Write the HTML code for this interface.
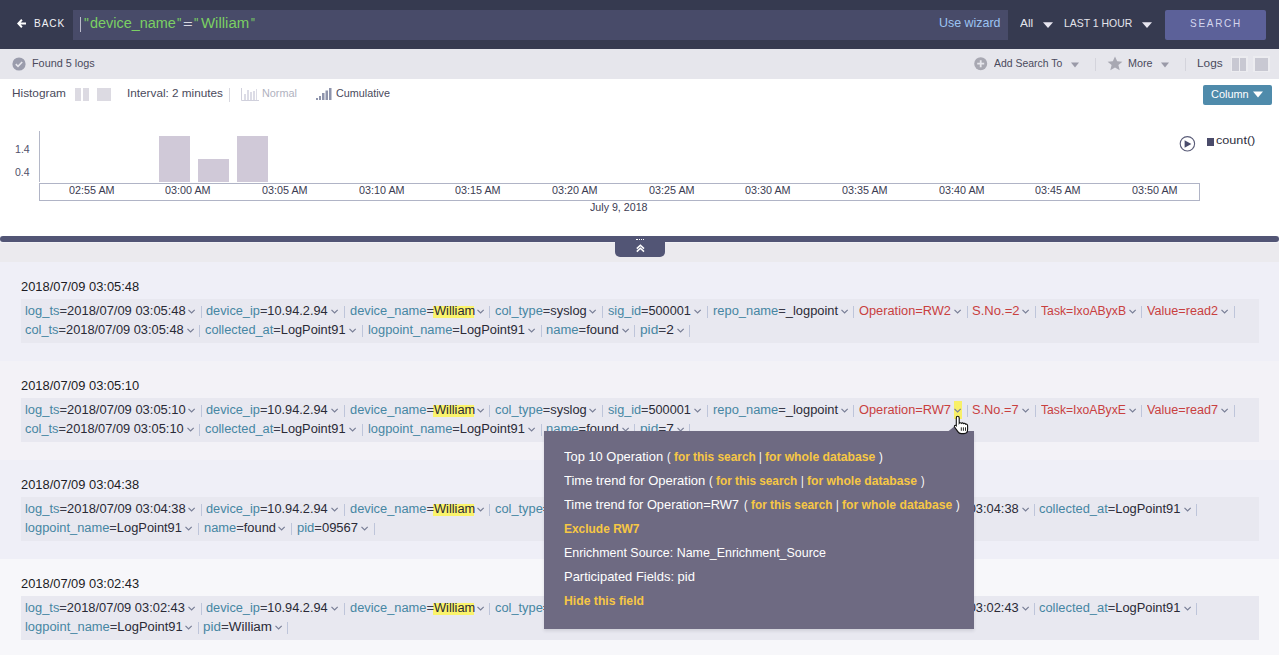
<!DOCTYPE html>
<html><head><meta charset="utf-8"><style>
html,body{margin:0;padding:0;width:1279px;height:655px;overflow:hidden;background:#efeff7;position:relative;font-family:"Liberation Sans", sans-serif}
.t{position:absolute;white-space:nowrap;transform-origin:0 0;font-family:"Liberation Sans", sans-serif}
</style></head><body>
<div style="position:absolute;left:0px;top:0px;width:1279px;height:49px;background:#363a50;"></div>
<svg style="position:absolute;left:16px;top:18px" width="11" height="11" viewBox="0 0 11 11"><path d="M5.2 1 L1 5.5 L5.2 10 L6.6 8.6 L4.6 6.6 L10 6.6 L10 4.4 L4.6 4.4 L6.6 2.4 Z" fill="#ffffff"/></svg>
<div class="t" style="left:33.91px;top:18.00px;font-size:11px;line-height:11px;color:#f2f2f6;font-weight:normal;letter-spacing:1px;transform:scaleX(0.9156)">BACK</div>
<div style="position:absolute;left:73px;top:10px;width:935px;height:30px;background:#484b69;"></div>
<div style="position:absolute;left:80px;top:17px;width:1.2px;height:15px;background:#bcbccc;"></div>
<div class="t" style="left:83.71px;top:16.00px;font-size:14px;line-height:14px;color:#7bd063;font-weight:normal;transform:scaleX(0.9750)">&quot;</div>
<div class="t" style="left:89.58px;top:16.00px;font-size:14px;line-height:14px;color:#7bd063;font-weight:normal;transform:scaleX(1.0310)">device_name</div>
<div class="t" style="left:177.16px;top:16.00px;font-size:14px;line-height:14px;color:#7bd063;font-weight:normal;transform:scaleX(0.8750)">&quot;</div>
<div class="t" style="left:183.05px;top:19.00px;font-size:11px;line-height:11px;color:#d8d8e2;font-weight:normal;transform:scaleX(1.5091)">=</div>
<div class="t" style="left:194.36px;top:16.00px;font-size:14px;line-height:14px;color:#7bd063;font-weight:normal;transform:scaleX(0.8750)">&quot;</div>
<div class="t" style="left:200.70px;top:16.00px;font-size:14px;line-height:14px;color:#7bd063;font-weight:normal;transform:scaleX(1.0689)">William</div>
<div class="t" style="left:250.71px;top:16.00px;font-size:14px;line-height:14px;color:#7bd063;font-weight:normal;transform:scaleX(0.7750)">&quot;</div>
<div class="t" style="left:939.08px;top:16.00px;font-size:13.5px;line-height:13.5px;color:#9cc3f3;font-weight:normal;transform:scaleX(0.9200)">Use wizard</div>
<div class="t" style="left:1019.60px;top:18.00px;font-size:11.5px;line-height:11.5px;color:#e4e4ec;font-weight:normal;transform:scaleX(1.0333)">All</div>
<svg style="position:absolute;left:1043px;top:22px" width="10" height="7" viewBox="0 0 10 7"><path d="M0 0.2 L10 0.2 L5 6 Z" fill="#e8e6f0"/></svg>
<div class="t" style="left:1064.09px;top:18.00px;font-size:11.5px;line-height:11.5px;color:#e4e4ec;font-weight:normal;transform:scaleX(0.9085)">LAST 1 HOUR</div>
<svg style="position:absolute;left:1142px;top:22px" width="10" height="7" viewBox="0 0 10 7"><path d="M0 0.2 L10 0.2 L5 6 Z" fill="#e8e6f0"/></svg>
<div style="position:absolute;left:1165px;top:10px;width:101px;height:30px;background:#5c6199;border-radius:2px;background-image:radial-gradient(rgba(50,50,80,0.45) 0.35px, transparent 0.6px);background-size:4px 4px;background-position:1px 1px"></div>
<div class="t" style="left:1189.57px;top:18.00px;font-size:11.5px;line-height:11.5px;color:#d4d6ee;font-weight:normal;letter-spacing:2px;transform:scaleX(0.8673)">SEARCH</div>
<div style="position:absolute;left:0px;top:49px;width:1279px;height:30px;background:#e6e6ec;"></div>
<svg style="position:absolute;left:12px;top:57px" width="14" height="14" viewBox="0 0 14 14"><circle cx="7" cy="7" r="6.6" fill="#9a9cac"/><path d="M3.8 7.2 L6 9.3 L10.2 5" stroke="#e6e6ec" stroke-width="1.6" fill="none"/></svg>
<div class="t" style="left:31.63px;top:58.00px;font-size:10.5px;line-height:10.5px;color:#4a4a5c;font-weight:normal;transform:scaleX(1.0319)">Found 5 logs</div>
<svg style="position:absolute;left:974px;top:57px" width="14" height="14" viewBox="0 0 14 14"><circle cx="6.7" cy="6.7" r="6.5" fill="#a8a8b2"/><path d="M6.7 3.2 V10.2 M3.2 6.7 H10.2" stroke="#e6e6ec" stroke-width="1.8"/></svg>
<div class="t" style="left:994.00px;top:58.00px;font-size:10.5px;line-height:10.5px;color:#4a4a5c;font-weight:normal;transform:scaleX(0.9927)">Add Search To</div>
<svg style="position:absolute;left:1071px;top:62px" width="8" height="6" viewBox="0 0 8 6"><path d="M0 0.5 L8 0.5 L4 5.5 Z" fill="#9a9aa8"/></svg>
<div style="position:absolute;left:1095px;top:58px;width:1px;height:13px;background:#d4d4dc;"></div>
<svg style="position:absolute;left:1107px;top:56px" width="16" height="15" viewBox="0 0 16 15"><path d="M8 0.5 L10.2 5.3 L15.4 5.7 L11.4 9.1 L12.7 14.3 L8 11.5 L3.3 14.3 L4.6 9.1 L0.6 5.7 L5.8 5.3 Z" fill="#a8a8b2"/></svg>
<div class="t" style="left:1127.93px;top:58.00px;font-size:10.5px;line-height:10.5px;color:#4a4a5c;font-weight:normal;transform:scaleX(1.0242)">More</div>
<svg style="position:absolute;left:1161px;top:62px" width="8" height="6" viewBox="0 0 8 6"><path d="M0 0.5 L8 0.5 L4 5.5 Z" fill="#9a9aa8"/></svg>
<div style="position:absolute;left:1185px;top:58px;width:1px;height:13px;background:#d4d4dc;"></div>
<div class="t" style="left:1197.16px;top:58.00px;font-size:10.5px;line-height:10.5px;color:#4a4a5c;font-weight:normal;transform:scaleX(1.1264)">Logs</div>
<div style="position:absolute;left:1231px;top:56px;width:17px;height:16px;background:#ececf0;"></div>
<div style="position:absolute;left:1232px;top:57.6px;width:6.5px;height:13.3px;background:#c8c8d2;"></div>
<div style="position:absolute;left:1240px;top:57.6px;width:6.3px;height:13.3px;background:#c8c8d2;"></div>
<div style="position:absolute;left:1253px;top:56px;width:17px;height:16px;background:#ececf0;"></div>
<div style="position:absolute;left:1254.7px;top:57.6px;width:13.3px;height:13.3px;background:#c8c8d2;"></div>
<div style="position:absolute;left:0px;top:79px;width:1279px;height:157px;background:#ffffff;"></div>
<div class="t" style="left:11.69px;top:88.00px;font-size:11px;line-height:11px;color:#4a4a5c;font-weight:normal;transform:scaleX(1.0749)">Histogram</div>
<div style="position:absolute;left:75px;top:88px;width:6px;height:13px;background:#dcdae2;"></div>
<div style="position:absolute;left:83px;top:88px;width:6px;height:13px;background:#dcdae2;"></div>
<div style="position:absolute;left:97px;top:88px;width:14px;height:13px;background:#dcdae2;"></div>
<div class="t" style="left:126.63px;top:88.00px;font-size:11px;line-height:11px;color:#4a4a5c;font-weight:normal;transform:scaleX(1.0678)">Interval: 2 minutes</div>
<div style="position:absolute;left:229px;top:88px;width:1px;height:14px;background:#d8d8e0;"></div>
<svg style="position:absolute;left:241px;top:88px" width="18" height="13" viewBox="0 0 18 13"><path d="M0.5 0 V12.5 H18" stroke="#d0d0dc" stroke-width="1" fill="none"/><rect x="3" y="6" width="2" height="6" fill="#dcdce6"/><rect x="6" y="2" width="2" height="10" fill="#dcdce6"/><rect x="9" y="4" width="2" height="8" fill="#dcdce6"/><rect x="12" y="3" width="2" height="9" fill="#dcdce6"/><rect x="15" y="1" width="1" height="11" fill="#dcdce6"/></svg>
<div class="t" style="left:261.96px;top:88.00px;font-size:11px;line-height:11px;color:#b0b2c0;font-weight:normal;transform:scaleX(0.9853)">Normal</div>
<svg style="position:absolute;left:316px;top:87px" width="16" height="14" viewBox="0 0 16 14"><rect x="0" y="11" width="2" height="2" fill="#8e94ac"/><rect x="3" y="9" width="2" height="4" fill="#8e94ac"/><rect x="6" y="6" width="2.5" height="7" fill="#8e94ac"/><rect x="9.5" y="3.5" width="2.5" height="9.5" fill="#8e94ac"/><rect x="13" y="1" width="2.5" height="12" fill="#8e94ac"/></svg>
<div class="t" style="left:336.21px;top:88.00px;font-size:11px;line-height:11px;color:#4a4a5c;font-weight:normal;transform:scaleX(0.9815)">Cumulative</div>
<div style="position:absolute;left:1203px;top:85px;width:69px;height:20px;background:#4f8bab;border-radius:2px"></div>
<div class="t" style="left:1210.50px;top:89.00px;font-size:11px;line-height:11px;color:#ffffff;font-weight:normal;transform:scaleX(0.9932)">Column</div>
<svg style="position:absolute;left:1253px;top:91px" width="10" height="7" viewBox="0 0 10 7"><path d="M0 0.5 L10 0.5 L5 6.5 Z" fill="#ffffff"/></svg>
<div style="position:absolute;left:39px;top:131px;width:1px;height:51px;background:#b4b8c8;"></div>
<div style="position:absolute;left:39px;top:183px;width:1159px;height:16px;border:1px solid #b0b4c6;border-top-width:1.5px"></div>
<div style="position:absolute;left:159.2px;top:135.8px;width:30.9px;height:46px;background:#d0c9d8;"></div>
<div style="position:absolute;left:198px;top:159px;width:30.9px;height:22.8px;background:#d0c9d8;"></div>
<div style="position:absolute;left:236.8px;top:135.8px;width:30.8px;height:46px;background:#d0c9d8;"></div>
<div class="t" style="left:14.84px;top:144.00px;font-size:10.5px;line-height:10.5px;color:#50506a;font-weight:normal;transform:scaleX(1.0074)">1.4</div>
<div class="t" style="left:14.95px;top:167.00px;font-size:10.5px;line-height:10.5px;color:#50506a;font-weight:normal;transform:scaleX(1.0000)">0.4</div>
<div class="t" style="left:68.64px;top:185.00px;font-size:10.5px;line-height:10.5px;color:#3c3c52;font-weight:normal;transform:scaleX(1.0273)">02:55 AM</div>
<div class="t" style="left:165.32px;top:185.00px;font-size:10.5px;line-height:10.5px;color:#3c3c52;font-weight:normal;transform:scaleX(1.0273)">03:00 AM</div>
<div class="t" style="left:262.00px;top:185.00px;font-size:10.5px;line-height:10.5px;color:#3c3c52;font-weight:normal;transform:scaleX(1.0273)">03:05 AM</div>
<div class="t" style="left:358.68px;top:185.00px;font-size:10.5px;line-height:10.5px;color:#3c3c52;font-weight:normal;transform:scaleX(1.0273)">03:10 AM</div>
<div class="t" style="left:455.36px;top:185.00px;font-size:10.5px;line-height:10.5px;color:#3c3c52;font-weight:normal;transform:scaleX(1.0273)">03:15 AM</div>
<div class="t" style="left:552.04px;top:185.00px;font-size:10.5px;line-height:10.5px;color:#3c3c52;font-weight:normal;transform:scaleX(1.0273)">03:20 AM</div>
<div class="t" style="left:648.72px;top:185.00px;font-size:10.5px;line-height:10.5px;color:#3c3c52;font-weight:normal;transform:scaleX(1.0273)">03:25 AM</div>
<div class="t" style="left:745.40px;top:185.00px;font-size:10.5px;line-height:10.5px;color:#3c3c52;font-weight:normal;transform:scaleX(1.0273)">03:30 AM</div>
<div class="t" style="left:842.08px;top:185.00px;font-size:10.5px;line-height:10.5px;color:#3c3c52;font-weight:normal;transform:scaleX(1.0273)">03:35 AM</div>
<div class="t" style="left:938.76px;top:185.00px;font-size:10.5px;line-height:10.5px;color:#3c3c52;font-weight:normal;transform:scaleX(1.0273)">03:40 AM</div>
<div class="t" style="left:1035.44px;top:185.00px;font-size:10.5px;line-height:10.5px;color:#3c3c52;font-weight:normal;transform:scaleX(1.0273)">03:45 AM</div>
<div class="t" style="left:1132.12px;top:185.00px;font-size:10.5px;line-height:10.5px;color:#3c3c52;font-weight:normal;transform:scaleX(1.0273)">03:50 AM</div>
<div class="t" style="left:590.45px;top:202.00px;font-size:10.5px;line-height:10.5px;color:#3c3c52;font-weight:normal;transform:scaleX(1.0161)">July 9, 2018</div>
<svg style="position:absolute;left:1179px;top:136px" width="17" height="17" viewBox="0 0 17 17"><circle cx="8.4" cy="7.8" r="7.2" fill="none" stroke="#5a5c78" stroke-width="1.1"/><path d="M5.6 4.2 L12.4 8 L5.6 11.8 Z" fill="#4a4c6c"/></svg>
<div style="position:absolute;left:1206.7px;top:138.1px;width:7.5px;height:7.8px;background:#4a4b6a;"></div>
<div class="t" style="left:1216.35px;top:135.00px;font-size:11.5px;line-height:11.5px;color:#2e2e40;font-weight:normal;transform:scaleX(1.0986)">count()</div>
<div style="position:absolute;left:0px;top:242px;width:1279px;height:20px;background:#ebeaee;"></div>
<div style="position:absolute;left:0px;top:242px;width:1279px;height:1px;background:#f1f1f4;"></div>
<div style="position:absolute;left:0px;top:236px;width:1279px;height:6px;background:#525575;border-radius:3px"></div>
<div style="position:absolute;left:615px;top:240px;width:50px;height:17px;background:#525575;border-radius:0 0 5px 5px"></div>
<div style="position:absolute;left:636px;top:238.5px;width:8px;height:1px;border-top:1px dotted #ffffff"></div>
<svg style="position:absolute;left:635.5px;top:243.5px" width="9" height="9" viewBox="0 0 9 9"><path d="M0.8 4.6 L4.4 1.2 L8 4.6 M0.8 7.6 L4.4 4.2 L8 7.6" stroke="#ffffff" stroke-width="1.5" fill="none"/></svg>
<div style="position:absolute;left:0px;top:262px;width:1279px;height:99px;background:#efeff7;"></div>
<div style="position:absolute;left:21px;top:299px;width:1238px;height:44px;background:#e8e8f0;"></div>
<div style="position:absolute;left:0px;top:361px;width:1279px;height:99px;background:#f3f2f7;"></div>
<div style="position:absolute;left:21px;top:398px;width:1238px;height:44px;background:#e8e8f0;"></div>
<div style="position:absolute;left:0px;top:460px;width:1279px;height:99px;background:#efeff7;"></div>
<div style="position:absolute;left:21px;top:497px;width:1238px;height:44px;background:#e8e8f0;"></div>
<div style="position:absolute;left:0px;top:559px;width:1279px;height:96px;background:#f7f7fa;"></div>
<div style="position:absolute;left:21px;top:596px;width:1238px;height:44px;background:#e8e8f0;"></div>
<div class="t" style="left:20.86px;top:281.00px;font-size:12px;line-height:12px;color:#1c1c24;font-weight:normal;transform:scaleX(1.0728)">2018/07/09 03:05:48</div>
<div class="t" style="left:20.86px;top:380.00px;font-size:12px;line-height:12px;color:#1c1c24;font-weight:normal;transform:scaleX(1.0728)">2018/07/09 03:05:10</div>
<div class="t" style="left:20.86px;top:479.00px;font-size:12px;line-height:12px;color:#1c1c24;font-weight:normal;transform:scaleX(1.0728)">2018/07/09 03:04:38</div>
<div class="t" style="left:20.86px;top:578.00px;font-size:12px;line-height:12px;color:#1c1c24;font-weight:normal;transform:scaleX(1.0728)">2018/07/09 03:02:43</div>
<div class="t" style="left:24.69px;top:305.00px;font-size:12px;line-height:12px;color:#000;font-weight:normal;transform:scaleX(1.0777)"><span style="color:#4686a3">log_ts</span><span style="color:#3a3a48">=</span><span style="color:#2a2a36">2018/07/09 03:05:48</span></div>
<svg style="position:absolute;left:188.10px;top:308.50px" width="8" height="5" viewBox="0 0 8 5"><path d="M0.5 0.8 L3.6 3.9 L6.7 0.8" stroke="#787e96" stroke-width="1.2" fill="none"/></svg>
<div style="position:absolute;left:201px;top:306px;width:1px;height:12px;background:#bec5da;"></div>
<div class="t" style="left:206.47px;top:305.00px;font-size:12px;line-height:12px;color:#000;font-weight:normal;transform:scaleX(1.0629)"><span style="color:#4686a3">device_ip</span><span style="color:#3a3a48">=</span><span style="color:#2a2a36">10.94.2.94</span></div>
<svg style="position:absolute;left:331.40px;top:308.50px" width="8" height="5" viewBox="0 0 8 5"><path d="M0.5 0.8 L3.6 3.9 L6.7 0.8" stroke="#787e96" stroke-width="1.2" fill="none"/></svg>
<div style="position:absolute;left:344px;top:306px;width:1px;height:12px;background:#bec5da;"></div>
<div style="position:absolute;left:432.8px;top:306.3px;width:41.19999999999999px;height:11.4px;background:#faf36c;"></div>
<div class="t" style="left:349.56px;top:305.00px;font-size:12px;line-height:12px;color:#000;font-weight:normal;transform:scaleX(1.0704)"><span style="color:#4686a3">device_name</span><span style="color:#3a3a48">=</span><span style="color:#2a2a36">William</span></div>
<svg style="position:absolute;left:476.60px;top:308.50px" width="8" height="5" viewBox="0 0 8 5"><path d="M0.5 0.8 L3.6 3.9 L6.7 0.8" stroke="#787e96" stroke-width="1.2" fill="none"/></svg>
<div style="position:absolute;left:489px;top:306px;width:1px;height:12px;background:#bec5da;"></div>
<div class="t" style="left:495.17px;top:305.00px;font-size:12px;line-height:12px;color:#000;font-weight:normal;transform:scaleX(1.0698)"><span style="color:#4686a3">col_type</span><span style="color:#3a3a48">=</span><span style="color:#2a2a36">syslog</span></div>
<svg style="position:absolute;left:589.20px;top:308.50px" width="8" height="5" viewBox="0 0 8 5"><path d="M0.5 0.8 L3.6 3.9 L6.7 0.8" stroke="#787e96" stroke-width="1.2" fill="none"/></svg>
<div style="position:absolute;left:602px;top:306px;width:1px;height:12px;background:#bec5da;"></div>
<div class="t" style="left:607.54px;top:305.00px;font-size:12px;line-height:12px;color:#000;font-weight:normal;transform:scaleX(1.0559)"><span style="color:#4686a3">sig_id</span><span style="color:#3a3a48">=</span><span style="color:#2a2a36">500001</span></div>
<svg style="position:absolute;left:693.80px;top:308.50px" width="8" height="5" viewBox="0 0 8 5"><path d="M0.5 0.8 L3.6 3.9 L6.7 0.8" stroke="#787e96" stroke-width="1.2" fill="none"/></svg>
<div style="position:absolute;left:707px;top:306px;width:1px;height:12px;background:#bec5da;"></div>
<div class="t" style="left:712.59px;top:305.00px;font-size:12px;line-height:12px;color:#000;font-weight:normal;transform:scaleX(1.0745)"><span style="color:#4686a3">repo_name</span><span style="color:#3a3a48">=</span><span style="color:#2a2a36">_logpoint</span></div>
<svg style="position:absolute;left:841.00px;top:308.50px" width="8" height="5" viewBox="0 0 8 5"><path d="M0.5 0.8 L3.6 3.9 L6.7 0.8" stroke="#787e96" stroke-width="1.2" fill="none"/></svg>
<div style="position:absolute;left:853px;top:306px;width:1px;height:12px;background:#bec5da;"></div>
<div class="t" style="left:859.37px;top:305.00px;font-size:12px;line-height:12px;color:#000;font-weight:normal;transform:scaleX(1.0674)"><span style="color:#c8403f">Operation</span><span style="color:#c8403f">=</span><span style="color:#c8403f">RW2</span></div>
<svg style="position:absolute;left:954.00px;top:308.50px" width="8" height="5" viewBox="0 0 8 5"><path d="M0.5 0.8 L3.6 3.9 L6.7 0.8" stroke="#787e96" stroke-width="1.2" fill="none"/></svg>
<div style="position:absolute;left:967px;top:306px;width:1px;height:12px;background:#bec5da;"></div>
<div class="t" style="left:972.26px;top:305.00px;font-size:12px;line-height:12px;color:#000;font-weight:normal;transform:scaleX(1.0877)"><span style="color:#c8403f">S.No.</span><span style="color:#c8403f">=</span><span style="color:#c8403f">2</span></div>
<svg style="position:absolute;left:1022.40px;top:308.50px" width="8" height="5" viewBox="0 0 8 5"><path d="M0.5 0.8 L3.6 3.9 L6.7 0.8" stroke="#787e96" stroke-width="1.2" fill="none"/></svg>
<div style="position:absolute;left:1035px;top:306px;width:1px;height:12px;background:#bec5da;"></div>
<div class="t" style="left:1041.05px;top:305.00px;font-size:12px;line-height:12px;color:#000;font-weight:normal;transform:scaleX(1.0163)"><span style="color:#c8403f">Task</span><span style="color:#c8403f">=</span><span style="color:#c8403f">IxoAByxB</span></div>
<svg style="position:absolute;left:1129.00px;top:308.50px" width="8" height="5" viewBox="0 0 8 5"><path d="M0.5 0.8 L3.6 3.9 L6.7 0.8" stroke="#787e96" stroke-width="1.2" fill="none"/></svg>
<div style="position:absolute;left:1141px;top:306px;width:1px;height:12px;background:#bec5da;"></div>
<div class="t" style="left:1147.40px;top:305.00px;font-size:12px;line-height:12px;color:#000;font-weight:normal;transform:scaleX(1.0522)"><span style="color:#c8403f">Value</span><span style="color:#c8403f">=</span><span style="color:#c8403f">read2</span></div>
<svg style="position:absolute;left:1221.20px;top:308.50px" width="8" height="5" viewBox="0 0 8 5"><path d="M0.5 0.8 L3.6 3.9 L6.7 0.8" stroke="#787e96" stroke-width="1.2" fill="none"/></svg>
<div style="position:absolute;left:1234px;top:306px;width:1px;height:12px;background:#bec5da;"></div>
<div class="t" style="left:24.97px;top:324.00px;font-size:12px;line-height:12px;color:#000;font-weight:normal;transform:scaleX(1.0685)"><span style="color:#4686a3">col_ts</span><span style="color:#3a3a48">=</span><span style="color:#2a2a36">2018/07/09 03:05:48</span></div>
<svg style="position:absolute;left:186.50px;top:327.50px" width="8" height="5" viewBox="0 0 8 5"><path d="M0.5 0.8 L3.6 3.9 L6.7 0.8" stroke="#787e96" stroke-width="1.2" fill="none"/></svg>
<div style="position:absolute;left:199px;top:325px;width:1px;height:12px;background:#bec5da;"></div>
<div class="t" style="left:205.07px;top:324.00px;font-size:12px;line-height:12px;color:#000;font-weight:normal;transform:scaleX(1.0662)"><span style="color:#4686a3">collected_at</span><span style="color:#3a3a48">=</span><span style="color:#2a2a36">LogPoint91</span></div>
<svg style="position:absolute;left:349.30px;top:327.50px" width="8" height="5" viewBox="0 0 8 5"><path d="M0.5 0.8 L3.6 3.9 L6.7 0.8" stroke="#787e96" stroke-width="1.2" fill="none"/></svg>
<div style="position:absolute;left:362px;top:325px;width:1px;height:12px;background:#bec5da;"></div>
<div class="t" style="left:367.80px;top:324.00px;font-size:12px;line-height:12px;color:#000;font-weight:normal;transform:scaleX(1.0706)"><span style="color:#4686a3">logpoint_name</span><span style="color:#3a3a48">=</span><span style="color:#2a2a36">LogPoint91</span></div>
<svg style="position:absolute;left:527.70px;top:327.50px" width="8" height="5" viewBox="0 0 8 5"><path d="M0.5 0.8 L3.6 3.9 L6.7 0.8" stroke="#787e96" stroke-width="1.2" fill="none"/></svg>
<div style="position:absolute;left:541px;top:325px;width:1px;height:12px;background:#bec5da;"></div>
<div class="t" style="left:546.19px;top:324.00px;font-size:12px;line-height:12px;color:#000;font-weight:normal;transform:scaleX(1.0840)"><span style="color:#4686a3">name</span><span style="color:#3a3a48">=</span><span style="color:#2a2a36">found</span></div>
<svg style="position:absolute;left:621.90px;top:327.50px" width="8" height="5" viewBox="0 0 8 5"><path d="M0.5 0.8 L3.6 3.9 L6.7 0.8" stroke="#787e96" stroke-width="1.2" fill="none"/></svg>
<div style="position:absolute;left:634px;top:325px;width:1px;height:12px;background:#bec5da;"></div>
<div class="t" style="left:639.84px;top:324.00px;font-size:12px;line-height:12px;color:#000;font-weight:normal;transform:scaleX(1.1404)"><span style="color:#4686a3">pid</span><span style="color:#3a3a48">=</span><span style="color:#2a2a36">2</span></div>
<svg style="position:absolute;left:676.60px;top:327.50px" width="8" height="5" viewBox="0 0 8 5"><path d="M0.5 0.8 L3.6 3.9 L6.7 0.8" stroke="#787e96" stroke-width="1.2" fill="none"/></svg>
<div style="position:absolute;left:689px;top:325px;width:1px;height:12px;background:#bec5da;"></div>
<div class="t" style="left:24.69px;top:404.00px;font-size:12px;line-height:12px;color:#000;font-weight:normal;transform:scaleX(1.0777)"><span style="color:#4686a3">log_ts</span><span style="color:#3a3a48">=</span><span style="color:#2a2a36">2018/07/09 03:05:10</span></div>
<svg style="position:absolute;left:188.10px;top:407.50px" width="8" height="5" viewBox="0 0 8 5"><path d="M0.5 0.8 L3.6 3.9 L6.7 0.8" stroke="#787e96" stroke-width="1.2" fill="none"/></svg>
<div style="position:absolute;left:201px;top:405px;width:1px;height:12px;background:#bec5da;"></div>
<div class="t" style="left:206.47px;top:404.00px;font-size:12px;line-height:12px;color:#000;font-weight:normal;transform:scaleX(1.0629)"><span style="color:#4686a3">device_ip</span><span style="color:#3a3a48">=</span><span style="color:#2a2a36">10.94.2.94</span></div>
<svg style="position:absolute;left:331.40px;top:407.50px" width="8" height="5" viewBox="0 0 8 5"><path d="M0.5 0.8 L3.6 3.9 L6.7 0.8" stroke="#787e96" stroke-width="1.2" fill="none"/></svg>
<div style="position:absolute;left:344px;top:405px;width:1px;height:12px;background:#bec5da;"></div>
<div style="position:absolute;left:432.8px;top:405.3px;width:41.19999999999999px;height:11.4px;background:#faf36c;"></div>
<div class="t" style="left:349.56px;top:404.00px;font-size:12px;line-height:12px;color:#000;font-weight:normal;transform:scaleX(1.0704)"><span style="color:#4686a3">device_name</span><span style="color:#3a3a48">=</span><span style="color:#2a2a36">William</span></div>
<svg style="position:absolute;left:476.60px;top:407.50px" width="8" height="5" viewBox="0 0 8 5"><path d="M0.5 0.8 L3.6 3.9 L6.7 0.8" stroke="#787e96" stroke-width="1.2" fill="none"/></svg>
<div style="position:absolute;left:489px;top:405px;width:1px;height:12px;background:#bec5da;"></div>
<div class="t" style="left:495.17px;top:404.00px;font-size:12px;line-height:12px;color:#000;font-weight:normal;transform:scaleX(1.0698)"><span style="color:#4686a3">col_type</span><span style="color:#3a3a48">=</span><span style="color:#2a2a36">syslog</span></div>
<svg style="position:absolute;left:589.20px;top:407.50px" width="8" height="5" viewBox="0 0 8 5"><path d="M0.5 0.8 L3.6 3.9 L6.7 0.8" stroke="#787e96" stroke-width="1.2" fill="none"/></svg>
<div style="position:absolute;left:602px;top:405px;width:1px;height:12px;background:#bec5da;"></div>
<div class="t" style="left:607.54px;top:404.00px;font-size:12px;line-height:12px;color:#000;font-weight:normal;transform:scaleX(1.0559)"><span style="color:#4686a3">sig_id</span><span style="color:#3a3a48">=</span><span style="color:#2a2a36">500001</span></div>
<svg style="position:absolute;left:693.80px;top:407.50px" width="8" height="5" viewBox="0 0 8 5"><path d="M0.5 0.8 L3.6 3.9 L6.7 0.8" stroke="#787e96" stroke-width="1.2" fill="none"/></svg>
<div style="position:absolute;left:707px;top:405px;width:1px;height:12px;background:#bec5da;"></div>
<div class="t" style="left:712.59px;top:404.00px;font-size:12px;line-height:12px;color:#000;font-weight:normal;transform:scaleX(1.0745)"><span style="color:#4686a3">repo_name</span><span style="color:#3a3a48">=</span><span style="color:#2a2a36">_logpoint</span></div>
<svg style="position:absolute;left:841.00px;top:407.50px" width="8" height="5" viewBox="0 0 8 5"><path d="M0.5 0.8 L3.6 3.9 L6.7 0.8" stroke="#787e96" stroke-width="1.2" fill="none"/></svg>
<div style="position:absolute;left:853px;top:405px;width:1px;height:12px;background:#bec5da;"></div>
<div class="t" style="left:859.37px;top:404.00px;font-size:12px;line-height:12px;color:#000;font-weight:normal;transform:scaleX(1.0674)"><span style="color:#c8403f">Operation</span><span style="color:#c8403f">=</span><span style="color:#c8403f">RW7</span></div>
<div style="position:absolute;left:954px;top:401.2px;width:8px;height:17.7px;background:#f8f068;"></div>
<svg style="position:absolute;left:954.00px;top:407.50px" width="8" height="5" viewBox="0 0 8 5"><path d="M0.5 0.8 L3.6 3.9 L6.7 0.8" stroke="#787e96" stroke-width="1.2" fill="none"/></svg>
<div style="position:absolute;left:967px;top:405px;width:1px;height:12px;background:#bec5da;"></div>
<div class="t" style="left:972.27px;top:404.00px;font-size:12px;line-height:12px;color:#000;font-weight:normal;transform:scaleX(1.0643)"><span style="color:#c8403f">S.No.</span><span style="color:#c8403f">=</span><span style="color:#c8403f">7</span></div>
<svg style="position:absolute;left:1022.40px;top:407.50px" width="8" height="5" viewBox="0 0 8 5"><path d="M0.5 0.8 L3.6 3.9 L6.7 0.8" stroke="#787e96" stroke-width="1.2" fill="none"/></svg>
<div style="position:absolute;left:1035px;top:405px;width:1px;height:12px;background:#bec5da;"></div>
<div class="t" style="left:1041.05px;top:404.00px;font-size:12px;line-height:12px;color:#000;font-weight:normal;transform:scaleX(1.0133)"><span style="color:#c8403f">Task</span><span style="color:#c8403f">=</span><span style="color:#c8403f">IxoAByxE</span></div>
<svg style="position:absolute;left:1129.00px;top:407.50px" width="8" height="5" viewBox="0 0 8 5"><path d="M0.5 0.8 L3.6 3.9 L6.7 0.8" stroke="#787e96" stroke-width="1.2" fill="none"/></svg>
<div style="position:absolute;left:1141px;top:405px;width:1px;height:12px;background:#bec5da;"></div>
<div class="t" style="left:1147.40px;top:404.00px;font-size:12px;line-height:12px;color:#000;font-weight:normal;transform:scaleX(1.0522)"><span style="color:#c8403f">Value</span><span style="color:#c8403f">=</span><span style="color:#c8403f">read7</span></div>
<svg style="position:absolute;left:1221.20px;top:407.50px" width="8" height="5" viewBox="0 0 8 5"><path d="M0.5 0.8 L3.6 3.9 L6.7 0.8" stroke="#787e96" stroke-width="1.2" fill="none"/></svg>
<div style="position:absolute;left:1234px;top:405px;width:1px;height:12px;background:#bec5da;"></div>
<div class="t" style="left:24.97px;top:423.00px;font-size:12px;line-height:12px;color:#000;font-weight:normal;transform:scaleX(1.0685)"><span style="color:#4686a3">col_ts</span><span style="color:#3a3a48">=</span><span style="color:#2a2a36">2018/07/09 03:05:10</span></div>
<svg style="position:absolute;left:186.50px;top:426.50px" width="8" height="5" viewBox="0 0 8 5"><path d="M0.5 0.8 L3.6 3.9 L6.7 0.8" stroke="#787e96" stroke-width="1.2" fill="none"/></svg>
<div style="position:absolute;left:199px;top:424px;width:1px;height:12px;background:#bec5da;"></div>
<div class="t" style="left:205.07px;top:423.00px;font-size:12px;line-height:12px;color:#000;font-weight:normal;transform:scaleX(1.0662)"><span style="color:#4686a3">collected_at</span><span style="color:#3a3a48">=</span><span style="color:#2a2a36">LogPoint91</span></div>
<svg style="position:absolute;left:349.30px;top:426.50px" width="8" height="5" viewBox="0 0 8 5"><path d="M0.5 0.8 L3.6 3.9 L6.7 0.8" stroke="#787e96" stroke-width="1.2" fill="none"/></svg>
<div style="position:absolute;left:362px;top:424px;width:1px;height:12px;background:#bec5da;"></div>
<div class="t" style="left:367.80px;top:423.00px;font-size:12px;line-height:12px;color:#000;font-weight:normal;transform:scaleX(1.0706)"><span style="color:#4686a3">logpoint_name</span><span style="color:#3a3a48">=</span><span style="color:#2a2a36">LogPoint91</span></div>
<svg style="position:absolute;left:527.70px;top:426.50px" width="8" height="5" viewBox="0 0 8 5"><path d="M0.5 0.8 L3.6 3.9 L6.7 0.8" stroke="#787e96" stroke-width="1.2" fill="none"/></svg>
<div style="position:absolute;left:541px;top:424px;width:1px;height:12px;background:#bec5da;"></div>
<div class="t" style="left:546.19px;top:423.00px;font-size:12px;line-height:12px;color:#000;font-weight:normal;transform:scaleX(1.0840)"><span style="color:#4686a3">name</span><span style="color:#3a3a48">=</span><span style="color:#2a2a36">found</span></div>
<svg style="position:absolute;left:621.90px;top:426.50px" width="8" height="5" viewBox="0 0 8 5"><path d="M0.5 0.8 L3.6 3.9 L6.7 0.8" stroke="#787e96" stroke-width="1.2" fill="none"/></svg>
<div style="position:absolute;left:634px;top:424px;width:1px;height:12px;background:#bec5da;"></div>
<div class="t" style="left:639.84px;top:423.00px;font-size:12px;line-height:12px;color:#000;font-weight:normal;transform:scaleX(1.1404)"><span style="color:#4686a3">pid</span><span style="color:#3a3a48">=</span><span style="color:#2a2a36">7</span></div>
<svg style="position:absolute;left:676.60px;top:426.50px" width="8" height="5" viewBox="0 0 8 5"><path d="M0.5 0.8 L3.6 3.9 L6.7 0.8" stroke="#787e96" stroke-width="1.2" fill="none"/></svg>
<div style="position:absolute;left:689px;top:424px;width:1px;height:12px;background:#bec5da;"></div>
<div class="t" style="left:24.69px;top:503.00px;font-size:12px;line-height:12px;color:#000;font-weight:normal;transform:scaleX(1.0777)"><span style="color:#4686a3">log_ts</span><span style="color:#3a3a48">=</span><span style="color:#2a2a36">2018/07/09 03:04:38</span></div>
<svg style="position:absolute;left:188.10px;top:506.50px" width="8" height="5" viewBox="0 0 8 5"><path d="M0.5 0.8 L3.6 3.9 L6.7 0.8" stroke="#787e96" stroke-width="1.2" fill="none"/></svg>
<div style="position:absolute;left:201px;top:504px;width:1px;height:12px;background:#bec5da;"></div>
<div class="t" style="left:206.47px;top:503.00px;font-size:12px;line-height:12px;color:#000;font-weight:normal;transform:scaleX(1.0629)"><span style="color:#4686a3">device_ip</span><span style="color:#3a3a48">=</span><span style="color:#2a2a36">10.94.2.94</span></div>
<svg style="position:absolute;left:331.40px;top:506.50px" width="8" height="5" viewBox="0 0 8 5"><path d="M0.5 0.8 L3.6 3.9 L6.7 0.8" stroke="#787e96" stroke-width="1.2" fill="none"/></svg>
<div style="position:absolute;left:344px;top:504px;width:1px;height:12px;background:#bec5da;"></div>
<div style="position:absolute;left:432.8px;top:504.3px;width:41.19999999999999px;height:11.4px;background:#faf36c;"></div>
<div class="t" style="left:349.56px;top:503.00px;font-size:12px;line-height:12px;color:#000;font-weight:normal;transform:scaleX(1.0704)"><span style="color:#4686a3">device_name</span><span style="color:#3a3a48">=</span><span style="color:#2a2a36">William</span></div>
<svg style="position:absolute;left:476.60px;top:506.50px" width="8" height="5" viewBox="0 0 8 5"><path d="M0.5 0.8 L3.6 3.9 L6.7 0.8" stroke="#787e96" stroke-width="1.2" fill="none"/></svg>
<div style="position:absolute;left:489px;top:504px;width:1px;height:12px;background:#bec5da;"></div>
<div class="t" style="left:495.17px;top:503.00px;font-size:12px;line-height:12px;color:#000;font-weight:normal;transform:scaleX(1.0698)"><span style="color:#4686a3">col_type</span><span style="color:#3a3a48">=</span><span style="color:#2a2a36">syslog</span></div>
<svg style="position:absolute;left:589.20px;top:506.50px" width="8" height="5" viewBox="0 0 8 5"><path d="M0.5 0.8 L3.6 3.9 L6.7 0.8" stroke="#787e96" stroke-width="1.2" fill="none"/></svg>
<div style="position:absolute;left:602px;top:504px;width:1px;height:12px;background:#bec5da;"></div>
<div class="t" style="left:859.77px;top:503.00px;font-size:12px;line-height:12px;color:#000;font-weight:normal;transform:scaleX(1.0685)"><span style="color:#4686a3">col_ts</span><span style="color:#3a3a48">=</span><span style="color:#2a2a36">2018/07/09 03:04:38</span></div>
<svg style="position:absolute;left:1021.60px;top:506.50px" width="8" height="5" viewBox="0 0 8 5"><path d="M0.5 0.8 L3.6 3.9 L6.7 0.8" stroke="#787e96" stroke-width="1.2" fill="none"/></svg>
<div style="position:absolute;left:1034px;top:504px;width:1px;height:12px;background:#bec5da;"></div>
<div class="t" style="left:1039.36px;top:503.00px;font-size:12px;line-height:12px;color:#000;font-weight:normal;transform:scaleX(1.0730)"><span style="color:#4686a3">collected_at</span><span style="color:#3a3a48">=</span><span style="color:#2a2a36">LogPoint91</span></div>
<svg style="position:absolute;left:1183.60px;top:506.50px" width="8" height="5" viewBox="0 0 8 5"><path d="M0.5 0.8 L3.6 3.9 L6.7 0.8" stroke="#787e96" stroke-width="1.2" fill="none"/></svg>
<div style="position:absolute;left:1196px;top:504px;width:1px;height:12px;background:#bec5da;"></div>
<div class="t" style="left:24.70px;top:522.00px;font-size:12px;line-height:12px;color:#000;font-weight:normal;transform:scaleX(1.0713)"><span style="color:#4686a3">logpoint_name</span><span style="color:#3a3a48">=</span><span style="color:#2a2a36">LogPoint91</span></div>
<svg style="position:absolute;left:185.00px;top:525.50px" width="8" height="5" viewBox="0 0 8 5"><path d="M0.5 0.8 L3.6 3.9 L6.7 0.8" stroke="#787e96" stroke-width="1.2" fill="none"/></svg>
<div style="position:absolute;left:198px;top:523px;width:1px;height:12px;background:#bec5da;"></div>
<div class="t" style="left:203.60px;top:522.00px;font-size:12px;line-height:12px;color:#000;font-weight:normal;transform:scaleX(1.0733)"><span style="color:#4686a3">name</span><span style="color:#3a3a48">=</span><span style="color:#2a2a36">found</span></div>
<svg style="position:absolute;left:278.20px;top:525.50px" width="8" height="5" viewBox="0 0 8 5"><path d="M0.5 0.8 L3.6 3.9 L6.7 0.8" stroke="#787e96" stroke-width="1.2" fill="none"/></svg>
<div style="position:absolute;left:291px;top:523px;width:1px;height:12px;background:#bec5da;"></div>
<div class="t" style="left:296.89px;top:522.00px;font-size:12px;line-height:12px;color:#000;font-weight:normal;transform:scaleX(1.0818)"><span style="color:#4686a3">pid</span><span style="color:#3a3a48">=</span><span style="color:#2a2a36">09567</span></div>
<svg style="position:absolute;left:361.00px;top:525.50px" width="8" height="5" viewBox="0 0 8 5"><path d="M0.5 0.8 L3.6 3.9 L6.7 0.8" stroke="#787e96" stroke-width="1.2" fill="none"/></svg>
<div style="position:absolute;left:374px;top:523px;width:1px;height:12px;background:#bec5da;"></div>
<div class="t" style="left:24.70px;top:602.00px;font-size:12px;line-height:12px;color:#000;font-weight:normal;transform:scaleX(1.0723)"><span style="color:#4686a3">log_ts</span><span style="color:#3a3a48">=</span><span style="color:#2a2a36">2018/07/09 03:02:43</span></div>
<svg style="position:absolute;left:188.10px;top:605.50px" width="8" height="5" viewBox="0 0 8 5"><path d="M0.5 0.8 L3.6 3.9 L6.7 0.8" stroke="#787e96" stroke-width="1.2" fill="none"/></svg>
<div style="position:absolute;left:201px;top:603px;width:1px;height:12px;background:#bec5da;"></div>
<div class="t" style="left:206.47px;top:602.00px;font-size:12px;line-height:12px;color:#000;font-weight:normal;transform:scaleX(1.0629)"><span style="color:#4686a3">device_ip</span><span style="color:#3a3a48">=</span><span style="color:#2a2a36">10.94.2.94</span></div>
<svg style="position:absolute;left:331.40px;top:605.50px" width="8" height="5" viewBox="0 0 8 5"><path d="M0.5 0.8 L3.6 3.9 L6.7 0.8" stroke="#787e96" stroke-width="1.2" fill="none"/></svg>
<div style="position:absolute;left:344px;top:603px;width:1px;height:12px;background:#bec5da;"></div>
<div style="position:absolute;left:432.8px;top:603.3px;width:41.19999999999999px;height:11.4px;background:#faf36c;"></div>
<div class="t" style="left:349.56px;top:602.00px;font-size:12px;line-height:12px;color:#000;font-weight:normal;transform:scaleX(1.0704)"><span style="color:#4686a3">device_name</span><span style="color:#3a3a48">=</span><span style="color:#2a2a36">William</span></div>
<svg style="position:absolute;left:476.60px;top:605.50px" width="8" height="5" viewBox="0 0 8 5"><path d="M0.5 0.8 L3.6 3.9 L6.7 0.8" stroke="#787e96" stroke-width="1.2" fill="none"/></svg>
<div style="position:absolute;left:489px;top:603px;width:1px;height:12px;background:#bec5da;"></div>
<div class="t" style="left:495.17px;top:602.00px;font-size:12px;line-height:12px;color:#000;font-weight:normal;transform:scaleX(1.0698)"><span style="color:#4686a3">col_type</span><span style="color:#3a3a48">=</span><span style="color:#2a2a36">syslog</span></div>
<svg style="position:absolute;left:589.20px;top:605.50px" width="8" height="5" viewBox="0 0 8 5"><path d="M0.5 0.8 L3.6 3.9 L6.7 0.8" stroke="#787e96" stroke-width="1.2" fill="none"/></svg>
<div style="position:absolute;left:602px;top:603px;width:1px;height:12px;background:#bec5da;"></div>
<div class="t" style="left:859.77px;top:602.00px;font-size:12px;line-height:12px;color:#000;font-weight:normal;transform:scaleX(1.0685)"><span style="color:#4686a3">col_ts</span><span style="color:#3a3a48">=</span><span style="color:#2a2a36">2018/07/09 03:02:43</span></div>
<svg style="position:absolute;left:1021.60px;top:605.50px" width="8" height="5" viewBox="0 0 8 5"><path d="M0.5 0.8 L3.6 3.9 L6.7 0.8" stroke="#787e96" stroke-width="1.2" fill="none"/></svg>
<div style="position:absolute;left:1034px;top:603px;width:1px;height:12px;background:#bec5da;"></div>
<div class="t" style="left:1039.36px;top:602.00px;font-size:12px;line-height:12px;color:#000;font-weight:normal;transform:scaleX(1.0730)"><span style="color:#4686a3">collected_at</span><span style="color:#3a3a48">=</span><span style="color:#2a2a36">LogPoint91</span></div>
<svg style="position:absolute;left:1183.60px;top:605.50px" width="8" height="5" viewBox="0 0 8 5"><path d="M0.5 0.8 L3.6 3.9 L6.7 0.8" stroke="#787e96" stroke-width="1.2" fill="none"/></svg>
<div style="position:absolute;left:1196px;top:603px;width:1px;height:12px;background:#bec5da;"></div>
<div class="t" style="left:24.69px;top:621.00px;font-size:12px;line-height:12px;color:#000;font-weight:normal;transform:scaleX(1.0768)"><span style="color:#4686a3">logpoint_name</span><span style="color:#3a3a48">=</span><span style="color:#2a2a36">LogPoint91</span></div>
<svg style="position:absolute;left:185.00px;top:624.50px" width="8" height="5" viewBox="0 0 8 5"><path d="M0.5 0.8 L3.6 3.9 L6.7 0.8" stroke="#787e96" stroke-width="1.2" fill="none"/></svg>
<div style="position:absolute;left:198px;top:622px;width:1px;height:12px;background:#bec5da;"></div>
<div class="t" style="left:203.26px;top:621.00px;font-size:12px;line-height:12px;color:#000;font-weight:normal;transform:scaleX(1.1187)"><span style="color:#4686a3">pid</span><span style="color:#3a3a48">=</span><span style="color:#2a2a36">William</span></div>
<svg style="position:absolute;left:275.20px;top:624.50px" width="8" height="5" viewBox="0 0 8 5"><path d="M0.5 0.8 L3.6 3.9 L6.7 0.8" stroke="#787e96" stroke-width="1.2" fill="none"/></svg>
<div style="position:absolute;left:287px;top:622px;width:1px;height:12px;background:#bec5da;"></div>
<div style="position:absolute;left:544px;top:431px;width:430px;height:198px;background:#6e6a82;box-shadow:0 2px 3px rgba(40,40,60,0.12)"></div>
<svg style="position:absolute;left:946px;top:422px" width="24" height="10" viewBox="0 0 24 10"><path d="M2 9.5 L12 1.5 L22 9.5 Z" fill="#6e6a82"/></svg>
<div class="t" style="left:564.35px;top:450.00px;font-size:13px;line-height:13px;color:#ffffff;font-weight:normal;transform:scaleX(0.9934)">Top 10 Operation</div>
<div class="t" style="left:666.88px;top:450.00px;font-size:13px;line-height:13px;color:#ffffff;font-weight:normal;transform:scaleX(0.8286)">(</div>
<div class="t" style="left:673.97px;top:450.00px;font-size:13px;line-height:13px;color:#f7c744;font-weight:bold;transform:scaleX(0.9130)">for this search</div>
<div class="t" style="left:758.80px;top:450.00px;font-size:13px;line-height:13px;color:#ffffff;font-weight:normal;transform:scaleX(0.8000)">|</div>
<div class="t" style="left:765.27px;top:450.00px;font-size:13px;line-height:13px;color:#f7c744;font-weight:bold;transform:scaleX(0.9376)">for whole database</div>
<div class="t" style="left:879.00px;top:450.00px;font-size:13px;line-height:13px;color:#ffffff;font-weight:normal;transform:scaleX(0.8857)">)</div>
<div class="t" style="left:564.35px;top:474.00px;font-size:13px;line-height:13px;color:#ffffff;font-weight:normal;transform:scaleX(1.0014)">Time trend for Operation</div>
<div class="t" style="left:709.36px;top:474.00px;font-size:13px;line-height:13px;color:#ffffff;font-weight:normal;transform:scaleX(0.8571)">(</div>
<div class="t" style="left:716.27px;top:474.00px;font-size:13px;line-height:13px;color:#f7c744;font-weight:bold;transform:scaleX(0.9073)">for this search</div>
<div class="t" style="left:800.80px;top:474.00px;font-size:13px;line-height:13px;color:#ffffff;font-weight:normal;transform:scaleX(0.8000)">|</div>
<div class="t" style="left:807.37px;top:474.00px;font-size:13px;line-height:13px;color:#f7c744;font-weight:bold;transform:scaleX(0.9333)">for whole database</div>
<div class="t" style="left:921.10px;top:474.00px;font-size:13px;line-height:13px;color:#ffffff;font-weight:normal;transform:scaleX(0.8286)">)</div>
<div class="t" style="left:564.35px;top:498.00px;font-size:13px;line-height:13px;color:#ffffff;font-weight:normal;transform:scaleX(0.9864)">Time trend for Operation=RW7</div>
<div class="t" style="left:743.78px;top:498.00px;font-size:13px;line-height:13px;color:#ffffff;font-weight:normal;transform:scaleX(0.8286)">(</div>
<div class="t" style="left:750.97px;top:498.00px;font-size:13px;line-height:13px;color:#f7c744;font-weight:bold;transform:scaleX(0.9096)">for this search</div>
<div class="t" style="left:835.60px;top:498.00px;font-size:13px;line-height:13px;color:#ffffff;font-weight:normal;transform:scaleX(0.8000)">|</div>
<div class="t" style="left:841.77px;top:498.00px;font-size:13px;line-height:13px;color:#f7c744;font-weight:bold;transform:scaleX(0.9368)">for whole database</div>
<div class="t" style="left:955.50px;top:498.00px;font-size:13px;line-height:13px;color:#ffffff;font-weight:normal;transform:scaleX(0.8571)">)</div>
<div class="t" style="left:563.81px;top:522.00px;font-size:13px;line-height:13px;color:#f7c744;font-weight:bold;transform:scaleX(0.9189)">Exclude RW7</div>
<div class="t" style="left:563.54px;top:546.00px;font-size:13px;line-height:13px;color:#ffffff;font-weight:normal;transform:scaleX(0.9565)">Enrichment Source: Name_Enrichment_Source</div>
<div class="t" style="left:563.51px;top:570.00px;font-size:13px;line-height:13px;color:#ffffff;font-weight:normal;transform:scaleX(0.9950)">Participated Fields: pid</div>
<div class="t" style="left:563.80px;top:594.00px;font-size:13px;line-height:13px;color:#f7c744;font-weight:bold;transform:scaleX(0.9385)">Hide this field</div>
<svg style="position:absolute;left:952.5px;top:415px" width="19" height="20" viewBox="0 0 19 20"><path d="M4.5 1.2 C5.6 1.2 6.2 2 6.2 3 L6.2 8.2 C6.6 7.6 7.8 7.5 8.3 8.3 C8.8 7.7 10 7.7 10.5 8.6 C11 8.1 12.3 8.2 12.7 9.2 C13.2 9 14.5 9.2 14.6 10.5 L14.6 14.5 C14.6 16.8 13.2 18.6 11 18.6 L8.2 18.6 C6.6 18.6 5.6 17.8 4.8 16.6 L1.6 12 C1 11 1.8 10 2.8 10.4 L3.3 10.8 L3.3 3 C3.3 2 3.6 1.2 4.5 1.2 Z" fill="#ffffff" stroke="#111" stroke-width="1.1"/><path d="M8.3 12.3 V15.8 M10.4 12.3 V15.8 M12.5 12.3 V15.8" stroke="#111" stroke-width="0.9"/></svg>
</body></html>
